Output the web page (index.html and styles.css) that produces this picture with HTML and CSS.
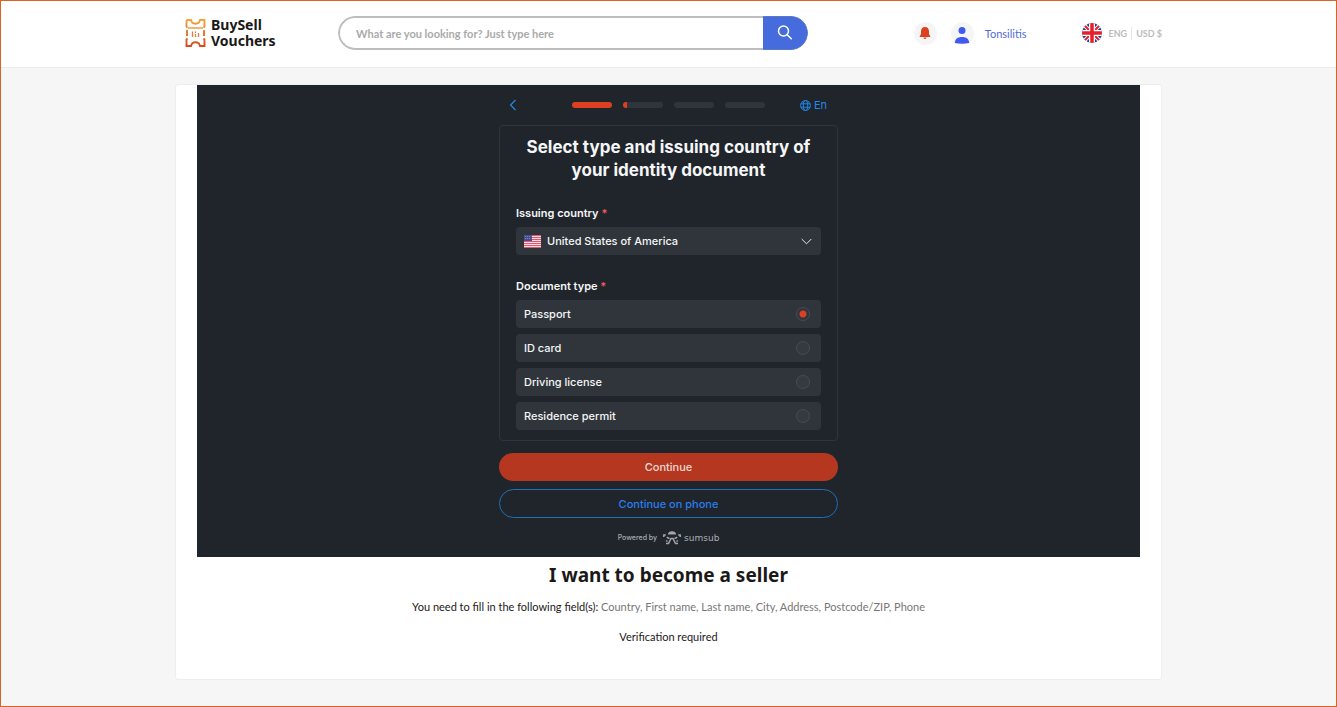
FILE: index.html
```html
<!DOCTYPE html>
<html lang="en">
<head>
<meta charset="utf-8">
<meta name="viewport" content="width=device-width, initial-scale=1">
<title>BuySell Vouchers – Become a seller</title>
<link rel="stylesheet" href="styles.css">
</head>
<body>
<header class="site-header">
  <div class="header-inner">
    <a class="logo" href="#">
      <svg width="21" height="28" viewBox="0 0 21 28" fill="none" aria-hidden="true">
        <defs><linearGradient id="ticket" x1="0" y1="0" x2="0" y2="1"><stop offset="0" stop-color="#f2a33c"/><stop offset="1" stop-color="#d9481f"/></linearGradient></defs>
        <path d="M1.500 1H6L7 3.500Q10.500 6 14 3.500L15 1H19.500V7.500L18.500 8.500M1.500 1V7.500L2.500 8.500M2 11V17M19 11V17M2.500 19.500L1.500 20.500V27H6L7 24.500Q10.500 22 14 24.500L15 27H19.500V20.500L18.500 19.500" stroke="url(#ticket)" stroke-width="1.900"/>
        <path d="M3 9H18" stroke="#ef9a45" stroke-width="1.500"/>
        <path d="M7.500 12.500V18M10.500 12.500V14M10.500 15V18M13.500 14V18" stroke="#e57a3b" stroke-width="1.300"/>
      </svg>
      <span>BuySell<br>Vouchers</span>
    </a>
    <form class="search">
      <input class="search-input" type="text" aria-label="Search" placeholder="What are you looking for? Just type here">
      <button class="search-button" type="button" aria-label="Search">
        <svg width="16" height="16" viewBox="0 0 16 16" fill="none" stroke="#fff" stroke-width="1.500" stroke-linecap="round"><circle cx="6.500" cy="6" r="5"/><path d="M10.200 9.700L14.300 13.800"/></svg>
      </button>
    </form>
    <div class="account">
      <button class="round-button" type="button" aria-label="Notifications">
        <svg width="12" height="14" viewBox="0 0 12 14" fill="#dc4021"><path d="M6 1C8.700 1 10 3 10 5.500V8L11.300 10.200V11H.7V10.200L2 8V5.500C2 3 3.300 1 6 1Z"/><path d="M4.500 11.500H7.500Q7.300 13 6 13T4.500 11.500Z"/></svg>
      </button>
      <a class="user" href="#">
        <span class="round-button">
          <svg width="16" height="18" viewBox="0 0 16 18" fill="#4059ee" aria-hidden="true"><circle cx="8" cy="4.500" r="3.500"/><path d="M.8 17C1 13 3.500 11 8 11S15 13 15.200 17Q8 18.500 .8 17Z"/></svg>
        </span>
        <span>Tonsilitis</span>
      </a>
    </div>
    <div class="locale">
      <svg width="20" height="20" viewBox="0 0 20 20" aria-hidden="true">
        <clipPath id="disc"><circle cx="10" cy="10" r="10"/></clipPath>
        <g clip-path="url(#disc)"><path fill="#273b8b" d="M0 0H20V20H0Z"/><path d="M0 0L20 20M20 0L0 20" stroke="#fff" stroke-width="4"/><path d="M0 0L20 20M20 0L0 20" stroke="#e5202c" stroke-width="2"/><path d="M10 0V20M0 10H20" stroke="#fff" stroke-width="6"/><path d="M10 0V20M0 10H20" stroke="#e5202c" stroke-width="3.500"/></g>
      </svg>
      <button class="locale-item" type="button">ENG</button>
      <button class="locale-item currency" type="button">USD $</button>
    </div>
  </div>
</header>

<main class="card">
  <section class="verify">
    <div class="verify-column">
      <div class="steps">
        <button class="plain" type="button" aria-label="Back"><svg width="8" height="12" viewBox="0 0 8 12" fill="none" stroke="#2487ea" stroke-width="1.200"><path d="M6.500 1L1.500 6L6.500 11"/></svg></button>
        <div class="bars"><span class="bar done"></span><span class="bar started"></span><span class="bar"></span><span class="bar"></span></div>
        <button class="plain" type="button">
          <svg width="11" height="11" viewBox="0 0 11 11" fill="none" stroke="#2487ea" aria-hidden="true"><circle cx="5.500" cy="5.500" r="4.900"/><ellipse cx="5.500" cy="5.500" rx="2.200" ry="4.900"/><path d="M1 3.800H10M1 7.200H10"/></svg>
          En
        </button>
      </div>
      <form class="document-form">
        <div class="panel">
          <h1 class="panel-title">Select type and issuing country of your identity document</h1>
          <div class="field">
            <label class="field-label" for="country">Issuing country <span class="required">*</span></label>
            <div class="select-wrap">
              <svg class="flag" width="17" height="13" viewBox="0 0 17 13" aria-hidden="true"><path fill="#f5dfe4" d="M0 0H17V13H0Z"/><path d="M0 .5H17M0 2.500H17M0 4.500H17M0 6.500H17M0 8.500H17M0 10.500H17M0 12.500H17" stroke="#e0566d"/><path fill="#46508e" d="M0 0H8V6H0Z"/><path d="M1 1.500H7.500M1 3.500H7.500" stroke="#8b91c4" stroke-width=".8" stroke-dasharray="1 1"/></svg>
              <select class="select" id="country"><option>United States of America</option></select>
              <svg class="chevron" width="11" height="7" viewBox="0 0 11 7" fill="none" stroke="#e8eaec" aria-hidden="true"><path d="M.7 1L5.500 5.800L10.300 1"/></svg>
            </div>
          </div>
          <fieldset class="field">
            <legend class="field-label">Document type <span class="required">*</span></legend>
            <div class="options">
              <label class="option">Passport<input class="radio" type="radio" name="doc" checked></label>
              <label class="option">ID card<input class="radio" type="radio" name="doc"></label>
              <label class="option">Driving license<input class="radio" type="radio" name="doc"></label>
              <label class="option">Residence permit<input class="radio" type="radio" name="doc"></label>
            </div>
          </fieldset>
        </div>
        <button class="action primary" type="button">Continue</button>
        <button class="action secondary" type="button">Continue on phone</button>
      </form>
      <div class="powered">
        <span>Powered by</span>
        <span class="brand">
          <svg width="18" height="14" viewBox="0 0 18 14" fill="none" stroke="#a3a7ac" stroke-width="1.500" aria-hidden="true"><path fill="#a3a7ac" stroke="none" d="M4.800 3.500Q5.500 .3 9 .3T13.200 3.500Z"/><path d="M2.800 4H.8V6M15.200 4H17.200V6M4 6Q5 7.500 6.500 7.300M14 6Q13 7.500 11.500 7.300M3 12.500H5.500L8 7.500H10L12.500 12.500H15M3 9.500L4.500 10.500M15 9.500L13.500 10.500"/></svg>
          sumsub
        </span>
      </div>
    </div>
  </section>
  <section class="seller">
    <h2 class="seller-title">I want to become a seller</h2>
    <p class="seller-text">You need to fill in the following field(s): <span class="muted">Country, First name, Last name, City, Address, Postcode/ZIP, Phone</span></p>
    <p class="seller-text">Verification required</p>
  </section>
</main>
</body>
</html>
```
FILE: styles.css
```css
* { box-sizing: border-box; }

body {
  margin: 0;
  min-height: 100vh;
  border: 1px solid #dc6422;
  background: #f6f6f6;
  color: #1b1918;
  font-family: Lato, "Noto Sans", sans-serif;
  font-size: 11px;
}

button, input, select { font: inherit; }
button { cursor: pointer; }
a { color: inherit; text-decoration: none; }
svg { display: block; flex: none; }

.site-header {
  background: #fff;
  border-bottom: 1px solid #ececec;
}

.header-inner {
  display: flex;
  align-items: center;
  max-width: 987px;
  height: 66px;
  margin: 0 auto;
  padding: 0 0 2px 10px;
}

.logo {
  display: flex;
  align-items: center;
  gap: 5px;
  width: 153px;
  font-family: "Noto Sans", sans-serif;
  font-size: 14px;
  font-weight: 700;
  line-height: 16px;
}

.search {
  display: flex;
  width: 470px;
  height: 34px;
  border-radius: 17px;
  overflow: hidden;
}

.search-input {
  flex: 1;
  min-width: 0;
  padding: 0 16px;
  border: 2px solid #bdbdbd;
  border-right: 0;
  border-radius: 17px 0 0 17px;
  background: #fff;
  font-weight: 700;
}

.search-input::placeholder { color: #aaa; opacity: 1; }

.search-button {
  display: grid;
  place-items: center;
  width: 45px;
  padding: 0;
  border: 1px solid #5b79c9;
  border-left: 0;
  border-radius: 0 17px 17px 0;
  background: #456bdc;
}

.account {
  display: flex;
  align-items: center;
  gap: 14px;
  margin-left: auto;
}

.user {
  display: flex;
  align-items: center;
  gap: 11px;
  color: #526bd8;
}

.user > span:last-child { font-size: 11px; }

.round-button {
  display: grid;
  place-items: center;
  width: 23px;
  height: 23px;
  padding: 0;
  border: 0;
  border-radius: 50%;
  background: #f5f5f5;
}

.user .round-button { padding-top: 3px; }

.locale {
  display: flex;
  align-items: center;
  margin-left: 56px;
}

.locale-item {
  padding: 0 4px 0 6px;
  border: 0;
  background: none;
  color: #bcbcbc;
  font-size: 9px;
  font-weight: 700;
  line-height: 13px;
}

.currency {
  padding: 0 0 0 4px;
  border-left: 1px solid #e5e5e5;
}

.card {
  max-width: 987px;
  min-height: 595px;
  margin: 16px auto 26px;
  border: 1px solid #eee;
  border-radius: 3px;
  background: #fff;
}

.verify {
  margin: 0 21px;
  background: #20252b;
  color: #f5f6f7;
  font-family: Inter, sans-serif;
  font-size: 11px;
}

.verify-column {
  max-width: 339px;
  margin: 0 auto;
}

.steps {
  display: flex;
  align-items: center;
  justify-content: space-between;
  height: 40px;
  padding: 0 11px 0 10px;
}

.bars { display: flex; gap: 11px; margin-left: 20px; }

.bar {
  width: 40px;
  height: 6px;
  border-radius: 3px;
  background: #2f353d;
}

.done { background: #dc4020; }
.started { background: linear-gradient(90deg, #dc4020 10%, #2f353d 10%); }

.plain {
  display: flex;
  align-items: center;
  gap: 3px;
  padding: 0;
  border: 0;
  background: none;
  color: #2487ea;
}

.document-form { display: flex; flex-direction: column; }

.panel {
  padding: 10px 16px;
  border: 1px solid #30353c;
  border-radius: 4px;
}

.panel-title {
  margin: 0 0 23px;
  font-size: 17px;
  font-weight: 700;
  line-height: 23px;
  text-align: center;
}

.field { margin: 0; padding: 0; border: 0; }
.field + .field { margin-top: 23px; }

.field-label {
  display: block;
  padding: 0 0 6px;
  font-weight: 600;
  line-height: 16px;
}

.required { color: #ef5966; }

.select-wrap { display: grid; align-items: center; }
.select-wrap > * { grid-area: 1 / 1; }

.select {
  width: 100%;
  height: 28px;
  padding: 0 31px;
  border: 0;
  border-radius: 4px;
  appearance: none;
  background: #30353b;
  color: inherit;
  font-weight: 500;
}

.flag, .chevron { z-index: 1; pointer-events: none; }
.flag { margin-left: 8px; }
.chevron { justify-self: end; margin-right: 9px; }

.options { display: grid; gap: 6px; }

.option {
  display: flex;
  align-items: center;
  justify-content: space-between;
  height: 28px;
  padding: 0 11px 0 8px;
  border-radius: 4px;
  background: #30353b;
  font-weight: 500;
}

.radio {
  appearance: none;
  width: 14px;
  height: 14px;
  margin: 0;
  border: 1px solid #474c52;
  border-radius: 50%;
  background: #353a40;
}

.radio:checked { background: radial-gradient(circle, #dc4020 3px, #30353b 4px); }

.action {
  height: 28px;
  padding: 0;
  border: 0;
  border-radius: 14px;
  font-weight: 500;
}

.primary {
  margin-top: 12px;
  background: #b53720;
  color: #eed8d4;
}

.secondary {
  height: 29px;
  margin-top: 8px;
  border: 1px solid #216fb5;
  border-radius: 15px;
  background: none;
  color: #287eed;
}

.powered {
  display: flex;
  align-items: center;
  justify-content: center;
  gap: 6px;
  height: 39px;
  color: #aaaeb3;
  font-size: 7px;
  font-weight: 500;
}

.brand {
  display: flex;
  align-items: center;
  gap: 3px;
  font-family: "DejaVu Sans", sans-serif;
  font-size: 9px;
}

.seller { padding: 4px 21px 20px; text-align: center; }

.seller-title {
  margin: 0 0 10px;
  font-family: "Noto Sans", sans-serif;
  font-size: 19px;
  font-weight: 700;
  line-height: 28px;
}

.seller-text { margin: 0 0 14px; line-height: 16px; }
.muted { color: #777; }
```
